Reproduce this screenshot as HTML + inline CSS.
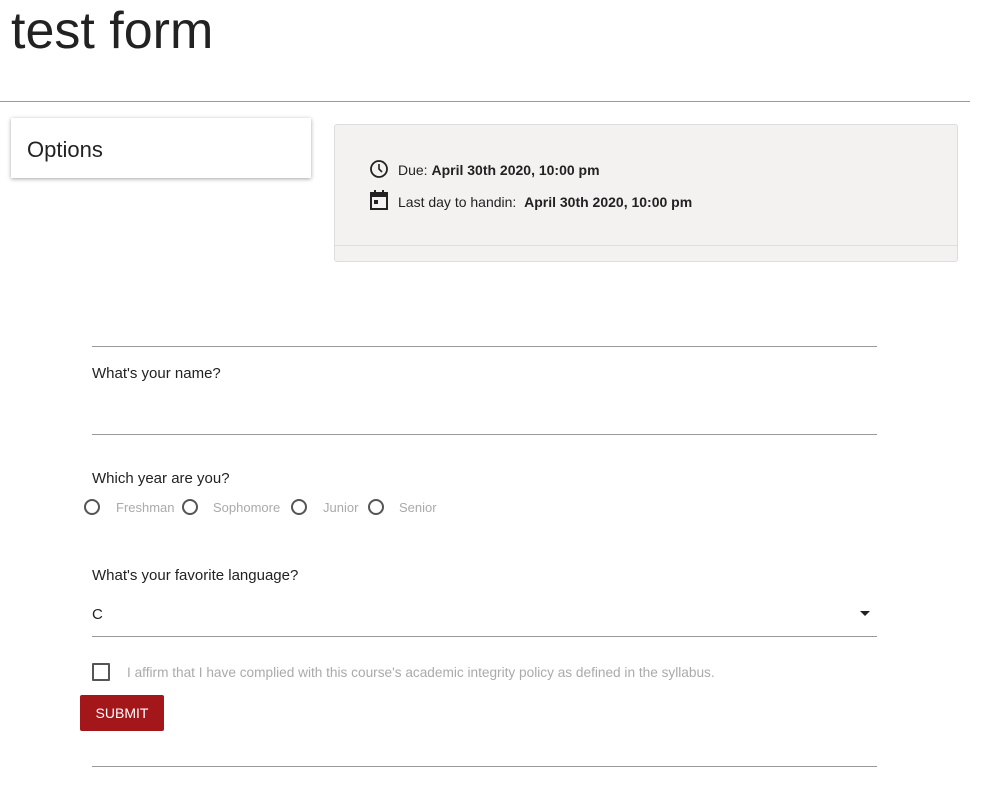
<!DOCTYPE html>
<html><head><meta charset="utf-8"><style>
body{margin:0;width:987px;height:793px;background:#fff;font-family:"Liberation Sans",sans-serif;color:#222;position:relative;overflow:hidden}
.a{position:absolute}
h1{position:absolute;left:11px;top:1px;margin:0;font-weight:normal;font-size:52px;color:#222;letter-spacing:0}
.hr{position:absolute;height:1px;background:#999}
.opt{left:11px;top:118px;width:300px;height:60px;box-shadow:0 1px 4px rgba(0,0,0,.35);background:#fff}
.opt span{position:absolute;left:16px;top:19px;font-size:22px;color:#222}
.card{left:334px;top:124px;width:622px;height:136px;background:#f4f2f1;border:1px solid #ddd;border-radius:3px}
.card .foot{position:absolute;left:0;right:0;top:120px;border-top:1px solid #ddd}
.t{font-size:14px}
.q{font-size:15px;color:#222}
.g{color:#aaa;font-size:13px}
.rad{width:12px;height:12px;border:2.5px solid #555;border-radius:50%}
</style></head><body>
<h1>test form</h1>
<div class="hr" style="left:0;top:101px;width:970px"></div>
<div class="a opt"><span>Options</span></div>
<div class="a card">
<svg class="a" style="left:34px;top:34px" width="20" height="20" viewBox="0 0 20 20"><circle cx="10" cy="10" r="8" fill="none" stroke="#222" stroke-width="1.8"/><path d="M10 5v5l3 3" fill="none" stroke="#222" stroke-width="1.6"/></svg>
<div class="a t" style="left:63px;top:37px">Due: <b>April 30th 2020, 10:00 pm</b></div>
<svg class="a" style="left:35px;top:65px" width="18" height="20" viewBox="0 0 18 20"><rect x="1" y="3" width="16" height="16" fill="none" stroke="#222" stroke-width="2"/><rect x="1" y="3" width="16" height="4" fill="#222"/><rect x="4" y="0" width="2" height="4" fill="#222"/><rect x="12" y="0" width="2" height="4" fill="#222"/><rect x="4" y="10" width="4" height="4" fill="#222"/></svg>
<div class="a t" style="left:63px;top:69px">Last day to handin:&nbsp; <b>April 30th 2020, 10:00 pm</b></div>
<div class="foot"></div>
</div>
<div class="hr" style="left:92px;top:346px;width:785px"></div>
<div class="a q" style="left:92px;top:365px">What's your name?</div>
<div class="hr" style="left:92px;top:434px;width:785px"></div>
<div class="a q" style="left:92px;top:470px">Which year are you?</div>
<div class="a rad" style="left:84px;top:499px"></div><div class="a g" style="left:116px;top:500px">Freshman</div>
<div class="a rad" style="left:182px;top:499px"></div><div class="a g" style="left:213px;top:500px">Sophomore</div>
<div class="a rad" style="left:291px;top:499px"></div><div class="a g" style="left:323px;top:500px">Junior</div>
<div class="a rad" style="left:368px;top:499px"></div><div class="a g" style="left:399px;top:500px">Senior</div>
<div class="a q" style="left:92px;top:567px">What's your favorite language?</div>
<div class="a q" style="left:92px;top:606px">C</div>
<svg class="a" style="left:859px;top:610px" width="12" height="8"><path d="M1 1h10L6 6z" fill="#222"/></svg>
<div class="hr" style="left:92px;top:636px;width:785px"></div>
<div class="a" style="left:92px;top:663px;width:14px;height:14px;border:2px solid #555;border-radius:1px"></div>
<div class="a g" style="left:127px;top:665px;font-size:13.65px">I affirm that I have complied with this course's academic integrity policy as defined in the syllabus.</div>
<div class="a" style="left:80px;top:695px;width:84px;height:36px;background:#a3171b;border-radius:2px;color:#fff;font-size:14px;line-height:36px;text-align:center">SUBMIT</div>
<div class="hr" style="left:92px;top:766px;width:785px"></div>
</body></html>
